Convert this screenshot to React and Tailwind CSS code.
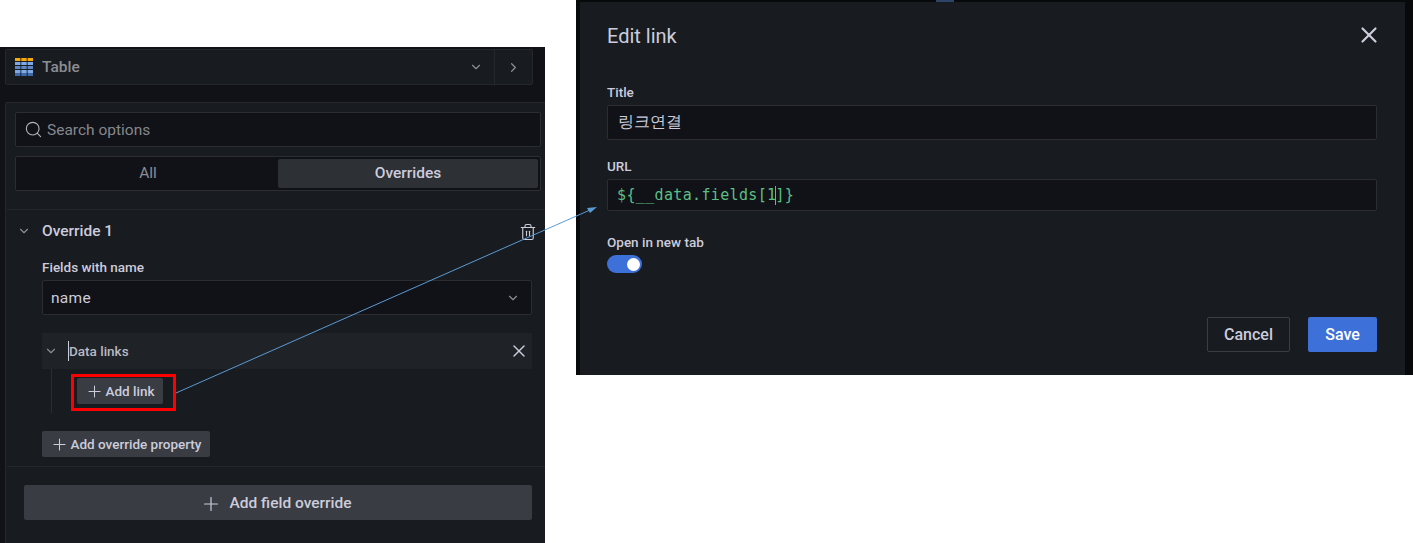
import { ChevronDown, ChevronRight, Plus, Search, Trash2, X } from 'lucide-react'

function TableIcon() {
  const rows = [
    ['#f5a90f', 58, 3],
    ['#7ea9e8', 62, 3],
    ['#5f86c4', 66, 3],
    ['#7ea9e8', 70, 3],
    ['#3f69a8', 73, 3],
  ]
  return (
    <svg width="18" height="18" viewBox="15 58 18 18" className="shrink-0">
      {rows.map(([fill, y, h]) => (
        <g key={y} fill={fill}>
          <rect x="15" y={y} width="5.4" height={h} />
          <rect x="21.3" y={y} width="5.4" height={h} />
          <rect x="27.6" y={y} width="5.4" height={h} />
        </g>
      ))}
    </svg>
  )
}

function AddButton({ label, className }) {
  return (
    <button className={`flex items-center justify-center rounded-[2px] bg-[#393c42] pr-[1px] text-[#ccccdc] font-medium ${className}`}>
      <Plus size={19} strokeWidth={1.3} className="mr-[2px]" />
      {label}
    </button>
  )
}

function VizBar() {
  return (
    <div className="ml-[5px] mt-[2px] flex h-[36px] w-[528px] items-center rounded-[2px] border border-[#24272c] bg-[#181b1f]">
      <div className="ml-[9px] flex flex-1 items-center">
        <TableIcon />
        <span className="ml-[9px] pt-[1px] text-[15.5px] font-medium text-[#8b8d93]">Table</span>
      </div>
      <ChevronDown size={14} className="mr-[11px] text-[#8b8d93]" />
      <div className="flex h-full w-[38px] items-center justify-center border-l border-[#24272c]">
        <ChevronRight size={15} className="text-[#8b8d93]" />
      </div>
    </div>
  )
}

function OptionsHeader() {
  return (
    <div className="px-[9px] pt-[9px]">
      <div className="flex h-[35px] w-[526px] items-center rounded-[2px] border border-[#2b2d32] bg-[#111217] pl-[8px] text-[15.5px] text-[#85878d]">
        <Search size={19} strokeWidth={1.4} className="mr-[4px] text-[#b4b5bb]" />
        <span className="pt-[2px]">Search options</span>
      </div>
      <div className="mt-[9px] flex h-[35px] w-[526px] items-center rounded-[2px] border border-[#2b2d32] bg-[#111217] pr-[2px] text-[15.5px]">
        <div className="flex-1 pl-[2px] text-center text-[#8b8d93]">All</div>
        <div className="flex h-[29px] w-[260px] items-center justify-center rounded-[2px] bg-[#2d3035] font-medium text-[#ccccdc]">Overrides</div>
      </div>
    </div>
  )
}

function OverrideSection() {
  return (
    <div className="mt-[18px] ml-[1px] h-[258px] border-y border-[#23262b] pl-[35px] pr-[12px]">
      <div className="relative flex h-[42px] items-center pt-[1px]">
        <ChevronDown size={14} className="absolute left-[-25px] top-[14px] text-[#8b8d93]" />
        <span className="flex-1 text-[15.5px] font-medium text-[#ccccdc]">Override 1</span>
        <Trash2 size={18} strokeWidth={1.5} className="mr-[-4px] text-[#ccccdc]" />
      </div>
      <div className="mt-[7px] text-[13.5px] font-medium leading-[16px] text-[#ccccdc]">Fields with name</div>
      <div className="mt-[5px] flex h-[35px] w-[490px] items-center justify-between rounded-[2px] border border-[#2b2d32] bg-[#111217] pl-[8px] pr-[11px] text-[15.5px] tracking-[0.3px] text-[#ccccdc]">
        <span className="pt-[2px]">name</span>
        <ChevronDown size={14} className="text-[#8b8d93]" />
      </div>
      <div className="mt-[18px] flex h-[36px] w-[490px] items-center bg-[#1f2227] pl-[2px] pr-[3px]">
        <ChevronDown size={14} className="text-[#8b8d93]" />
        <span className="ml-[10px] flex-1 border-l border-[#ccccdc] text-[13.5px] font-medium text-[#b9bac4]">Data links</span>
        <X size={20} strokeWidth={1.75} className="text-[#ccccdc]" />
      </div>
      <div className="ml-[9px] h-[44px] border-l border-[#2b2d32] pl-[25px] pt-[9px]">
        <AddButton label="Add link" className="h-[26px] w-[86px] text-[13.5px]" />
      </div>
      <AddButton label="Add override property" className="mt-[18px] h-[26px] w-[168px] text-[13.5px]" />
    </div>
  )
}

function FieldsPanel() {
  return (
    <section className="mt-[47px] flex h-[496px] w-[545px] shrink-0 flex-col overflow-hidden bg-[#111217]">
      <VizBar />
      <div className="ml-[5px] mt-[17px] w-[540px] flex-1 rounded-tl-[2px] border-l border-t border-[#24272c] bg-[#181b1f]">
        <OptionsHeader />
        <OverrideSection />
        <div className="pl-[18px] pt-[18px]">
          <AddButton label="Add field override" className="h-[35px] w-[508px] pt-[2px] !pr-[4px] text-[15.5px] [&>svg]:mr-[7px] [&>svg]:size-[22px]" />
        </div>
      </div>
    </section>
  )
}

function EditLinkModal() {
  return (
    <section className="relative ml-[31px] h-[375px] w-[837px] shrink-0 bg-[#08090b] pl-[4px] pr-[8px] pt-[2px]">
      <div className="absolute left-[360px] top-0 h-[2px] w-[18px] bg-[#2c4468]" />
      <div className="h-[373px] bg-[#181b1f] px-[27px] text-[#ccccdc]">
        <div className="flex h-[68px] items-center justify-between">
          <h2 className="text-[20px] leading-none text-[#ccccdc]">Edit link</h2>
          <X size={26} strokeWidth={2} className="mr-[-4px] mt-[-2px]" />
        </div>
        <div className="mt-[14px] text-[13.5px] font-medium leading-[16px]">Title</div>
        <div className="mt-[5px] flex h-[35px] w-[770px] items-center rounded-[2px] border border-[#2b2d32] bg-[#111217] pl-[10px] text-[15.5px] text-[#ccccdc]">
          링크연결
        </div>
        <div className="mt-[18px] text-[13.5px] font-medium leading-[16px]">URL</div>
        <div className="mt-[5px] flex h-[32px] w-[770px] items-center rounded-[2px] border border-[#2b2d32] bg-[#111217] pl-[9px] font-['DejaVu_Sans_Mono',monospace] text-[15px] tracking-[0.35px] text-[#5cbf85]">
          {'${__data.fields[1'}<span className="ml-[-1px] mr-[-1px] h-[19px] border-l border-[#5cbf85]" />{']}'}
        </div>
        <div className="mt-[23px] text-[13.5px] font-medium leading-[16px]">Open in new tab</div>
        <div className="mt-[5px] flex h-[18px] w-[35px] items-center justify-end rounded-full bg-[#3d71d9] pr-[2px]">
          <span className="size-[13px] rounded-full bg-white" />
        </div>
        <div className="mt-[44px] flex w-[770px] justify-end gap-[18px] text-[16px] font-medium">
          <button className="h-[35px] w-[83px] rounded-[2px] border border-[#3b3e44] text-[#ccccdc]">Cancel</button>
          <button className="h-[35px] w-[69px] rounded-[2px] bg-[#3d71d9] text-white">Save</button>
        </div>
      </div>
    </section>
  )
}

export default function App() {
  return (
    <div className="relative flex h-[543px] w-[1413px] items-start overflow-hidden bg-white font-['Roboto',sans-serif]">
      <FieldsPanel />
      <EditLinkModal />
      {/* annotation drawn over both screenshots */}
      <div className="absolute left-[71px] top-[374px] h-[37px] w-[105px] border-[3px] border-[#ff0000]" />
      <svg className="pointer-events-none absolute left-0 top-0" width="1413" height="543">
        <line x1="176" y1="393" x2="590" y2="210" stroke="#5b9bd5" strokeWidth="1" />
        <polygon points="597,207 587,208 590,213" fill="#5b9bd5" />
      </svg>
    </div>
  )
}
